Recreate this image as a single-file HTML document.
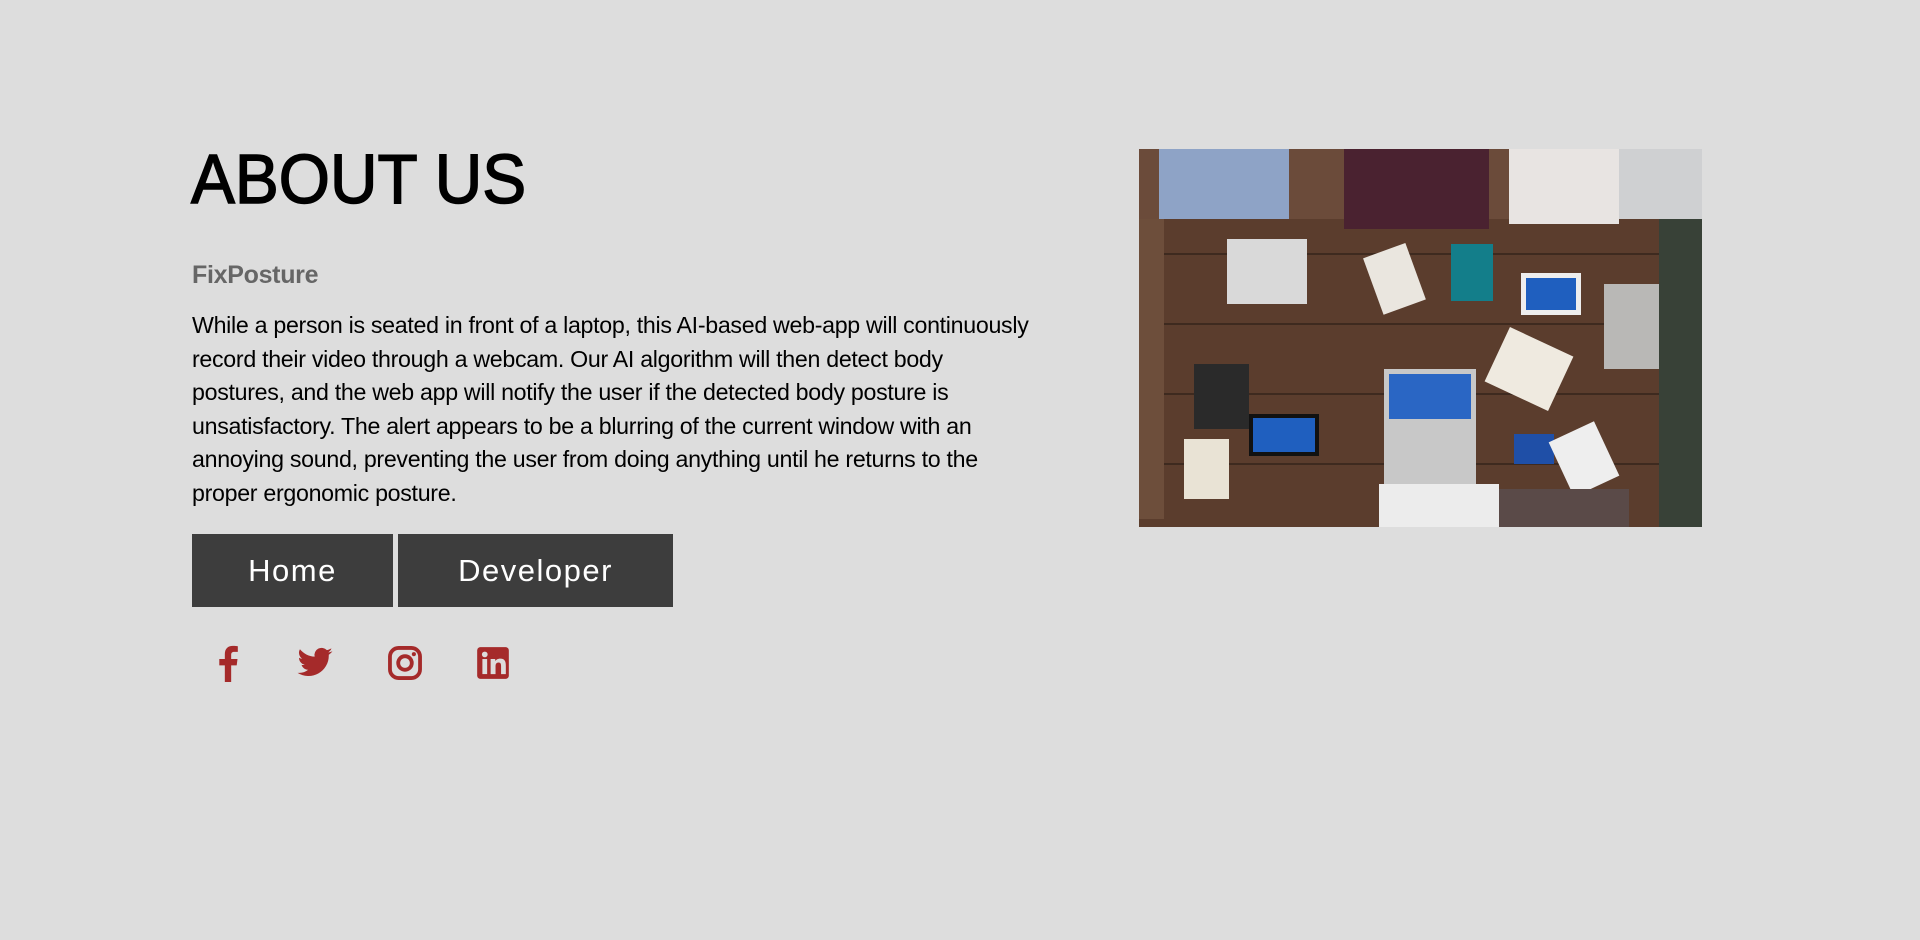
<!DOCTYPE html>
<html><head><meta charset="utf-8"><style>
body{margin:0;width:1920px;height:940px;background:#dddddd;font-family:"Liberation Sans",sans-serif;position:relative;overflow:hidden}
h1{position:absolute;left:191px;top:143px;margin:0;font-size:70px;font-weight:400;color:#000;transform:scaleX(.94);transform-origin:left;line-height:72px;-webkit-text-stroke:1.5px #000}
.sub{position:absolute;left:192px;top:261px;font-size:25px;font-weight:700;color:#666;letter-spacing:-0.3px}
p{position:absolute;left:192px;top:309px;margin:0;width:845px;font-size:23.2px;line-height:33.5px;color:#000;letter-spacing:-0.3px}
.btn{position:absolute;top:534px;height:73px;background:#3d3d3d;color:#fff;font-size:31px;letter-spacing:1.5px;display:flex;align-items:center;justify-content:center}
.ic{position:absolute;top:644px;width:38px;height:38px}
.img{position:absolute;left:1139px;top:149px;width:563px;height:378px;overflow:hidden;background:#5a3c2c}
</style></head><body>
<h1>ABOUT US</h1>
<div class="sub">FixPosture</div>
<p>While a person is seated in front of a laptop, this AI-based web-app will continuously record their video through a webcam. Our AI algorithm will then detect body postures, and the web app will notify the user if the detected body posture is unsatisfactory. The alert appears to be a blurring of the current window with an annoying sound, preventing the user from doing anything until he returns to the proper ergonomic posture.</p>
<div class="btn" style="left:192px;width:201px">Home</div>
<div class="btn" style="left:398px;width:275px">Developer</div>
<svg class="ic" style="left:209px" viewBox="0 0 24 24"><path fill="#a52a2a" d="M14 24V13.5h3.5l.5-4h-4V7c0-1.2.3-2 2-2h2.2V1.4C17.8 1.3 16.5 1.2 15 1.2c-3 0-5 1.8-5 5.2v3.1H6.5v4H10V24z"/></svg>
<svg class="ic" style="left:296px" viewBox="0 0 24 24"><path fill="#a52a2a" d="M23 4.6c-.8.4-1.7.6-2.6.7.9-.6 1.6-1.4 2-2.5-.9.5-1.9.9-2.9 1.1a4.5 4.5 0 0 0-7.7 4.1C8 7.8 4.7 6 2.5 3.3a4.5 4.5 0 0 0 1.4 6c-.7 0-1.4-.2-2-.6 0 2.2 1.6 4 3.6 4.4-.7.2-1.4.2-2 .1.6 1.8 2.2 3.1 4.2 3.1A9 9 0 0 1 1 18.2 12.8 12.8 0 0 0 20.7 7.4V6.8c.9-.6 1.7-1.4 2.3-2.2z"/></svg>
<svg class="ic" style="left:386px" viewBox="0 0 24 24"><rect x="2.5" y="2.5" width="19" height="19" rx="5.5" fill="none" stroke="#a52a2a" stroke-width="2.4"/><circle cx="12" cy="12" r="4.3" fill="none" stroke="#a52a2a" stroke-width="2.4"/><circle cx="17.6" cy="6.4" r="1.3" fill="#a52a2a"/></svg>
<svg class="ic" style="left:474px" viewBox="0 0 24 24"><rect x="2" y="2" width="20" height="20" rx="2" fill="#a52a2a"/><rect x="5.3" y="9.5" width="3" height="9.5" fill="#ddd"/><circle cx="6.8" cy="6.6" r="1.8" fill="#ddd"/><path fill="#ddd" d="M10.5 9.5h2.9v1.3c.5-.9 1.6-1.6 3.2-1.6 3 0 3.5 2 3.5 4.5V19h-3v-4.7c0-1.2 0-2.6-1.6-2.6s-1.9 1.2-1.9 2.5V19h-3.1z"/></svg>
<div class="img">
<svg width="563" height="378" viewBox="0 0 563 378">
<rect width="563" height="378" fill="#5b3d2d"/>
<g stroke="#3e2a1f" stroke-width="2"><line x1="0" y1="105" x2="563" y2="105"/><line x1="0" y1="175" x2="563" y2="175"/><line x1="0" y1="245" x2="563" y2="245"/><line x1="0" y1="315" x2="563" y2="315"/></g>
<rect x="0" y="0" width="563" height="70" fill="#6b4b3a"/>
<rect x="20" y="0" width="130" height="70" fill="#8ea3c6"/>
<rect x="205" y="0" width="145" height="80" fill="#4a2230"/>
<rect x="370" y="0" width="110" height="75" fill="#e8e4e2"/>
<rect x="480" y="0" width="83" height="70" fill="#cfd0d2"/>
<rect x="88" y="90" width="80" height="65" fill="#d9d9d9"/>
<rect x="233" y="100" width="45" height="60" fill="#eae6df" transform="rotate(-20 255 130)"/>
<rect x="312" y="95" width="42" height="57" fill="#137e8a"/>
<rect x="382" y="124" width="60" height="42" fill="#eeeeee"/><rect x="387" y="129" width="50" height="32" fill="#1f5fbf"/>
<rect x="465" y="135" width="60" height="85" fill="#b9b8b6"/>
<rect x="245" y="220" width="92" height="115" fill="#c8c8c8"/><rect x="250" y="225" width="82" height="45" fill="#2a66c4"/>
<rect x="355" y="190" width="70" height="60" fill="#efeae0" transform="rotate(25 390 220)"/>
<rect x="55" y="215" width="55" height="65" fill="#2a2a2a"/>
<rect x="110" y="265" width="70" height="42" fill="#111"/><rect x="114" y="269" width="62" height="34" fill="#1f5fbf"/>
<rect x="45" y="290" width="45" height="60" fill="#e9e3d5"/>
<rect x="375" y="285" width="40" height="30" fill="#1f4fa7"/>
<rect x="420" y="280" width="50" height="60" fill="#eee" transform="rotate(-25 445 310)"/>
<rect x="240" y="335" width="120" height="43" fill="#ececec"/>
<rect x="360" y="340" width="130" height="38" fill="#5a4a48"/>
<rect x="520" y="70" width="43" height="308" fill="#384137"/>
<rect x="0" y="70" width="25" height="300" fill="#6d4e3b"/>
</svg>
</div>
</body></html>
